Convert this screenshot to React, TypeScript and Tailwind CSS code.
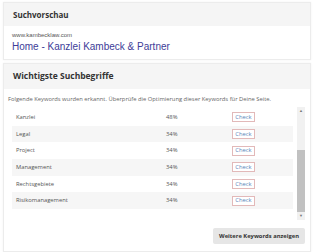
const keywords = [
  { name: "Kanzlei", pct: "48%" },
  { name: "Legal", pct: "34%" },
  { name: "Project", pct: "34%" },
  { name: "Management", pct: "34%" },
  { name: "Rechtsgebiete", pct: "34%" },
  { name: "Risikomanagement", pct: "34%" },
];

function Card({ title, children }: { title: string; children: React.ReactNode }) {
  return (
    <div className="border border-[#ececec] bg-white shadow-[0_0_2px_rgba(0,0,0,0.06)]">
      <div className="flex h-[23px] items-center bg-[#f5f5f5] px-[9px] text-[8px] font-bold text-[#333]">
        {title}
      </div>
      {children}
    </div>
  );
}

export default function App() {
  return (
    <div
      className="flex h-[252px] w-[314px] flex-col gap-[3px] bg-white px-[3px] pt-[2px]"
      style={{ fontFamily: '"Open Sans", sans-serif' }}
    >
      <Card title="Suchvorschau">
        <div className="px-[8px] pt-[5px] pb-[6px]" style={{ fontFamily: '"Liberation Sans", Arial, sans-serif' }}>
          <div className="text-[6px] leading-[8px] text-[#555]">www.kambecklaw.com</div>
          <div className="mt-[2px] text-[10px] leading-[12px] text-[#3d3d98]">Home - Kanzlei Kambeck &amp; Partner</div>
        </div>
      </Card>

      <div className="flex flex-1 flex-col border border-[#ececec] bg-white shadow-[0_0_2px_rgba(0,0,0,0.06)]">
        <div className="flex h-[25px] items-center bg-[#f5f5f5] px-[9px] text-[8.5px] font-bold text-[#333]">
          Wichtigste Suchbegriffe
        </div>
        <div className="px-[4px] pt-[6px] text-[5.8px] leading-[8px] text-[#666]">
          Folgende Keywords wurden erkannt. Überprüfe die Optimierung dieser Keywords für Deine Seite.
        </div>
        <div className="ml-[8px] mr-[5px] mt-[4px] flex h-[113px]">
          <div className="flex flex-1 flex-col pt-[2px] pr-[4px]">
            {keywords.map((k, i) => (
              <div
                key={k.name}
                className={`flex h-[16.7px] items-center text-[5.8px] text-[#555] ${i % 2 === 1 ? "bg-[#f6f6f6]" : "bg-white"}`}
              >
                <div className="w-[154px] pl-[4px]">{k.name}</div>
                <div className="w-[66px]">{k.pct}</div>
                <div className="flex h-[10px] w-[23px] items-center justify-center border border-[#e2b9b9] bg-white text-[5.8px] text-[#5a84b8]">
                  Check
                </div>
              </div>
            ))}
          </div>
          <div className="flex w-[8px] flex-col items-center bg-[#f1f1f1]">
            <div className="flex h-[8px] items-center text-[4px] leading-none text-[#777]">▲</div>
            <div className="flex w-full flex-1 flex-col pt-[35px]">
              <div className="w-full flex-1 bg-[#c1c1c1]" />
            </div>
            <div className="flex h-[8px] items-center text-[4px] leading-none text-[#777]">▼</div>
          </div>
        </div>
        <div className="mt-[8px] flex justify-end pr-[5px]">
          <div className="flex h-[16px] items-center rounded-[2px] bg-[#e6e6e6] px-[6px] text-[5.8px] font-bold text-[#333]">
            Weitere Keywords anzeigen
          </div>
        </div>
      </div>
    </div>
  );
}
